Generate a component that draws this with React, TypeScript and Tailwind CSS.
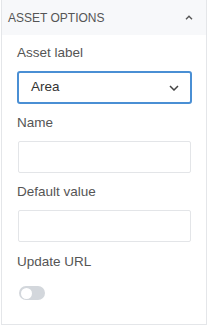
export default function App() {
  return (
    <div className="w-[209px] h-[328px] bg-white pl-[1px] font-['Liberation_Sans',Arial,sans-serif]">
      <div className="w-[206px] h-[325px] border-l border-r border-b border-[#e4e6e9]">
        <div className="h-[35px] bg-[#f7f8fa] flex items-center justify-between pl-[6px] pr-[13px] text-[12px] text-[#555]">
          <span>ASSET OPTIONS</span>
          <svg width="8" height="5" viewBox="0 0 8 5" fill="none">
            <path d="M1 4.3 L4 1.3 L7 4.3" stroke="#555" strokeWidth="1.4" />
          </svg>
        </div>
        <div className="pl-[15px] pr-[14px] pt-[9px] text-[13.5px] text-[#555]">
          <div className="leading-[18px]">Asset label</div>
          <div className="mt-[9px] h-[33px] border-2 border-[#4a8fd4] rounded-[3px] flex items-center justify-between pl-[12px] pr-[11px] text-[#333]">
            <span>Area</span>
            <svg width="10" height="6" viewBox="0 0 10 6" fill="none">
              <path d="M1 1 L5 5 L9 1" stroke="#444" strokeWidth="1.5" />
            </svg>
          </div>
          <div className="mt-[10px] leading-[18px]">Name</div>
          <div className="mt-[9px] h-[32px] ml-[1px] mr-[1px] border border-[#e3e5e8] rounded-[2px]" />
          <div className="mt-[10px] leading-[18px]">Default value</div>
          <div className="mt-[9px] h-[32px] ml-[1px] mr-[1px] border border-[#e3e5e8] rounded-[2px]" />
          <div className="mt-[11px] leading-[18px]">Update URL</div>
          <div className="mt-[15px] ml-[2px] w-[26px] h-[14px] rounded-full bg-[#d3d7dc] p-[1.5px]">
            <div className="w-[11px] h-[11px] rounded-full bg-white" />
          </div>
        </div>
      </div>
    </div>
  );
}
